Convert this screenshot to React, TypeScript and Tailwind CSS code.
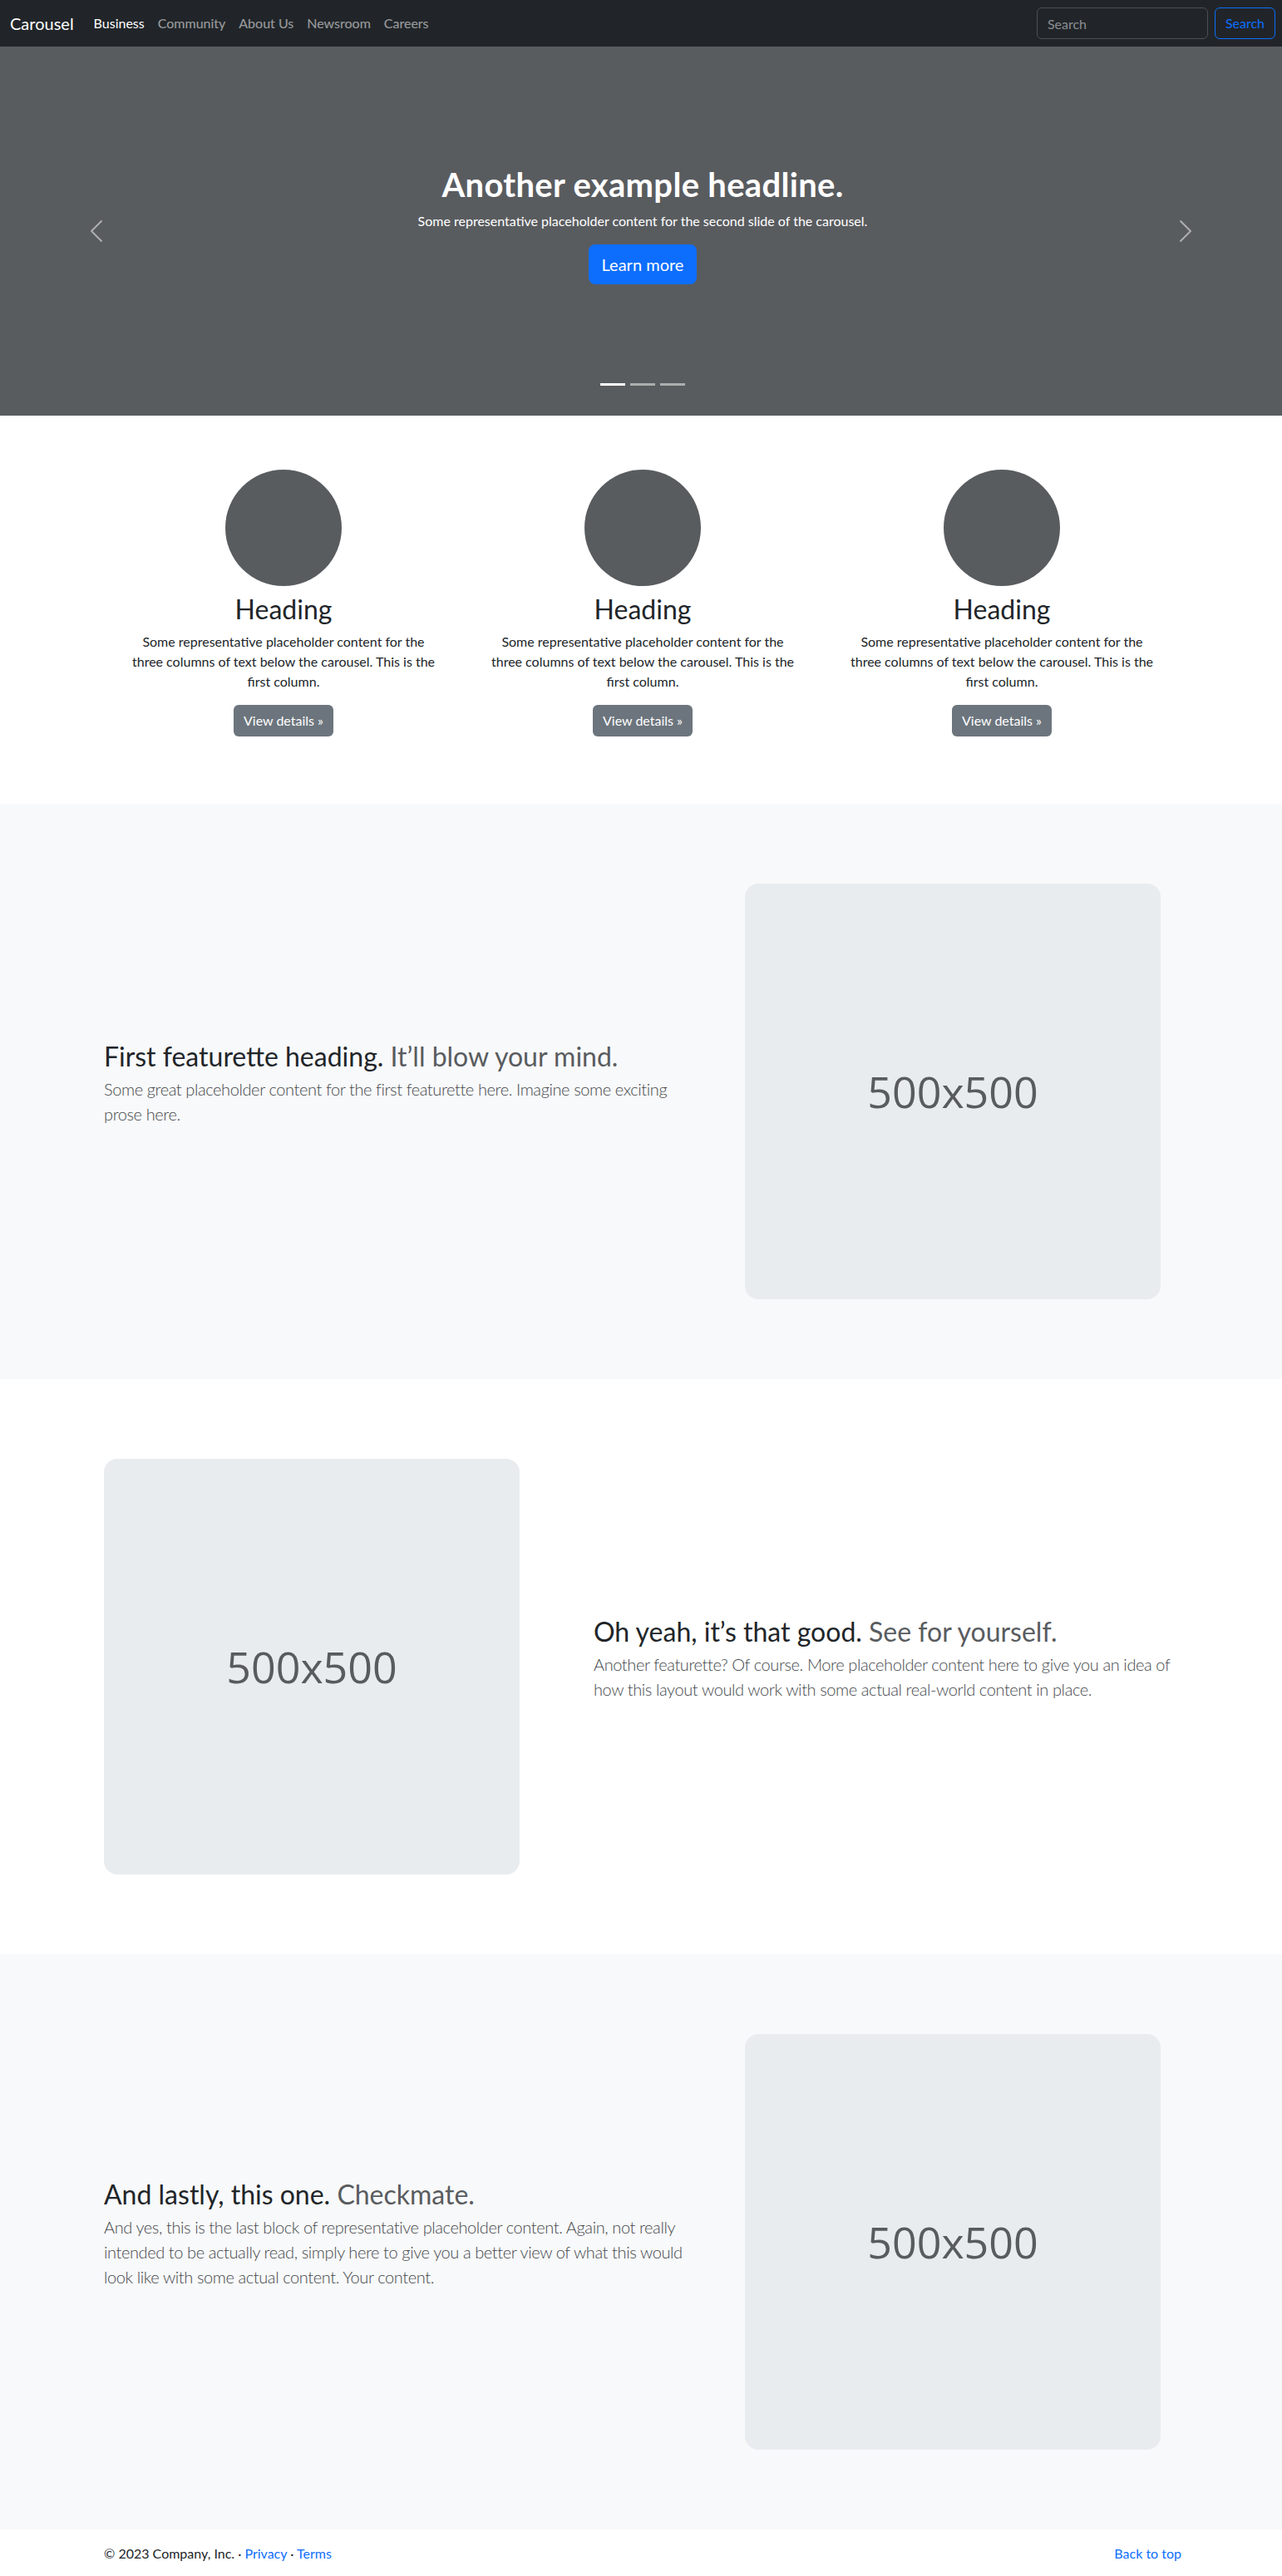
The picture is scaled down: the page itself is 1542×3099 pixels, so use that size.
import React from "react";

const navLinks = ["Business", "Community", "About Us", "Newsroom", "Careers"];

function Placeholder() {
  return (
    <div className="w-[500px] h-[500px] rounded-2xl bg-[#e9ecef] flex items-center justify-center">
      <span className="font-['Open_Sans',sans-serif] text-[52px] text-[#595c5f] leading-none">500x500</span>
    </div>
  );
}

function MarketingCol() {
  return (
    <div className="flex flex-col items-center text-center">
      <div className="w-[140px] h-[140px] rounded-full bg-[#595c5f]" />
      <h2 className="mt-[9px] mb-2 text-[32px] leading-[1.2] font-normal text-[#212529]">Heading</h2>
      <p className="w-[380px] mb-4 text-base leading-6 text-[#212529]">
        Some representative placeholder content for the three columns of text below the carousel. This is the first column.
      </p>
      <a href="#" className="bg-[#6c757d] text-white text-base leading-6 px-3 py-[7px] rounded-md">
        View details »
      </a>
    </div>
  );
}

function FeatText({ title, muted, body, wide }: { title: string; muted: string; body: string; wide?: boolean }) {
  return (
    <div className={wide ? "w-[715px]" : "w-[707px]"}>
      <h2 className="text-[32px] leading-none font-normal mb-2 text-[#212529]">
        {title} <span className="text-[#595c5f]">{muted}</span>
      </h2>
      <p className="text-xl font-light leading-[30px] tracking-[-0.4px] mb-4 text-[#45484c]">{body}</p>
    </div>
  );
}

export default function App() {
  return (
    <div className="font-[Lato,sans-serif] text-[#212529] bg-white">
      {/* Navbar */}
      <nav className="h-14 bg-[#212529] flex items-center pl-3 pr-2">
        <a href="#" className="text-white text-xl leading-[30px] mr-4">Carousel</a>
        <ul className="flex">
          {navLinks.map((l, i) => (
            <li key={l}>
              <a href="#" className={"px-2 text-base leading-6 " + (i === 0 ? "text-white" : "text-white/55")}>
                {l}
              </a>
            </li>
          ))}
        </ul>
        <form className="ml-auto flex items-center" onSubmit={(e) => e.preventDefault()}>
          <input
            placeholder="Search"
            className="w-[206px] h-[38px] px-3 mr-2 rounded-md border border-[#495057] bg-[#212529] text-white text-base placeholder:text-[#8b8e91] outline-none"
          />
          <button className="h-[38px] px-3 rounded-md border border-[#0d6efd] text-[#0d6efd] text-base">Search</button>
        </form>
      </nav>

      {/* Carousel */}
      <section className="relative h-[444px] bg-[#595c5f]">
        <div className="flex flex-col items-center pt-[142px] pl-1 text-white text-center">
          <h1 className="text-[40px] font-bold leading-[1.2] tracking-[0.3px] mb-2">Another example headline.</h1>
          <p className="text-base leading-6 mb-4">Some representative placeholder content for the second slide of the carousel.</p>
          <a href="#" className="bg-[#0d6efd] text-white text-xl leading-[30px] px-4 py-[9px] rounded-lg">Learn more</a>
        </div>
        <button className="absolute left-0 top-0 bottom-0 w-[15%] flex items-center justify-center opacity-50">
          <svg width="32" height="32" viewBox="0 0 16 16" fill="#fff">
            <path d="M11.354 1.646a.5.5 0 0 1 0 .708L5.707 8l5.647 5.646a.5.5 0 0 1-.708.708l-6-6a.5.5 0 0 1 0-.708l6-6a.5.5 0 0 1 .708 0z" />
          </svg>
        </button>
        <button className="absolute right-0 top-0 bottom-0 w-[15%] flex items-center justify-center opacity-50">
          <svg width="32" height="32" viewBox="0 0 16 16" fill="#fff">
            <path d="M4.646 1.646a.5.5 0 0 1 .708 0l6 6a.5.5 0 0 1 0 .708l-6 6a.5.5 0 0 1-.708-.708L10.293 8 4.646 2.354a.5.5 0 0 1 0-.708z" />
          </svg>
        </button>
        <div className="absolute left-0 right-0 bottom-[36px] flex justify-center gap-[6px] pl-1">
          <span className="w-[30px] h-[3px] bg-white" />
          <span className="w-[30px] h-[3px] bg-white/50" />
          <span className="w-[30px] h-[3px] bg-white/50" />
        </div>
      </section>

      {/* Marketing */}
      <section className="bg-white pt-[65px] pb-[81px]">
        <div className="w-[1300px] pl-1 mx-auto grid grid-cols-3">
          <MarketingCol />
          <MarketingCol />
          <MarketingCol />
        </div>
      </section>

      {/* Featurette 1 */}
      <section className="bg-[#f8f9fa] py-24">
        <div className="w-[1300px] pl-1 mx-auto grid grid-cols-[771px_500px] items-center">
          <FeatText
            wide
            title="First featurette heading."
            muted="It’ll blow your mind."
            body="Some great placeholder content for the first featurette here. Imagine some exciting prose here."
          />
          <Placeholder />
        </div>
      </section>

      {/* Featurette 2 */}
      <section className="bg-white py-24">
        <div className="w-[1300px] pl-1 mx-auto grid grid-cols-[589px_707px] items-center">
          <Placeholder />
          <FeatText
            title="Oh yeah, it’s that good."
            muted="See for yourself."
            body="Another featurette? Of course. More placeholder content here to give you an idea of how this layout would work with some actual real-world content in place."
          />
        </div>
      </section>

      {/* Featurette 3 */}
      <section className="bg-[#f8f9fa] py-24">
        <div className="w-[1300px] pl-1 mx-auto grid grid-cols-[771px_500px] items-center">
          <FeatText
            wide
            title="And lastly, this one."
            muted="Checkmate."
            body="And yes, this is the last block of representative placeholder content. Again, not really intended to be actually read, simply here to give you a better view of what this would look like with some actual content. Your content."
          />
          <Placeholder />
        </div>
      </section>

      {/* Footer */}
      <footer className="w-[1300px] pl-1 mx-auto flex justify-between pt-[17px] pb-[14px] text-base leading-6">
        <p>
          © 2023 Company, Inc. · <a href="#" className="text-[#0d6efd]">Privacy</a> ·{" "}
          <a href="#" className="text-[#0d6efd]">Terms</a>
        </p>
        <p>
          <a href="#" className="text-[#0d6efd]">Back to top</a>
        </p>
      </footer>
    </div>
  );
}
